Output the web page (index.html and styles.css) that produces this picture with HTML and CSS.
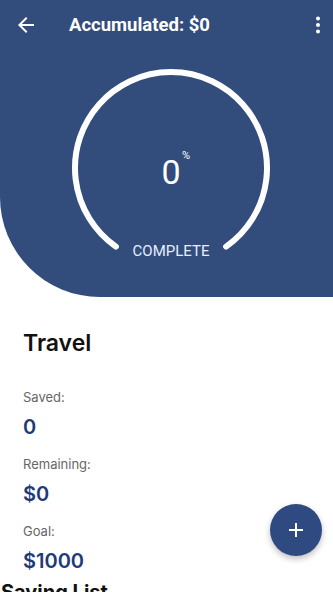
FILE: index.html
```html
<!DOCTYPE html>
<html>
<head>
<meta charset="utf-8">
<link rel="stylesheet" href="styles.css">
</head>
<body>
<div class="screen">
  <header class="hero">
    <div class="toolbar">
      <svg class="back" width="24" height="24" viewBox="0 0 24 24"><path d="M20 11H7.83l5.59-5.59L12 4l-8 8 8 8 1.41-1.41L7.83 13H20v-2z" fill="#fff"/></svg>
      <div class="title">Accumulated: $0</div>
      <svg class="more" width="24" height="24" viewBox="0 0 24 24"><circle cx="12" cy="5.5" r="2" fill="#fff"/><circle cx="12" cy="12" r="2" fill="#fff"/><circle cx="12" cy="18.5" r="2" fill="#fff"/></svg>
    </div>
    <svg class="gauge" width="333" height="247" viewBox="0 50 333 247">
      <path d="M115.9 246.6 A96 96 0 1 1 226.1 246.6" fill="none" stroke="#fff" stroke-width="6" stroke-linecap="round"/>
      <text x="171" y="184" text-anchor="middle" class="pct">0</text>
      <text x="182" y="159" class="pctsign">%</text>
      <text x="171" y="256" text-anchor="middle" class="complete">COMPLETE</text>
    </svg>
  </header>
  <main class="details">
    <h1 class="name">Travel</h1>
    <div class="stat">
      <div class="label">Saved:</div>
      <div class="value">0</div>
    </div>
    <div class="stat">
      <div class="label">Remaining:</div>
      <div class="value">$0</div>
    </div>
    <div class="stat">
      <div class="label">Goal:</div>
      <div class="value">$1000</div>
    </div>
    <h2 class="list">Saving List</h2>
  </main>
  <button class="fab"><svg width="18" height="18" viewBox="0 0 18 18"><path d="M9 2v14M2 9h14" stroke="#fff" stroke-width="2"/></svg></button>
</div>
</body>
</html>
```
FILE: styles.css
```css
* { box-sizing: border-box; }
html, body { margin: 0; padding: 0; background: #fff; }
body { width: 333px; height: 592px; overflow: hidden; font-family: "Inter", "Roboto", sans-serif; }
.screen { position: relative; width: 333px; height: 592px; overflow: hidden; }
.hero {
  background: #324c7c;
  height: 297px;
  border-bottom-left-radius: 100px;
  display: flex;
  flex-direction: column;
}
.toolbar {
  height: 50px;
  display: flex;
  align-items: center;
  padding: 0 3px 0 14px;
}
.back { flex: none; }
.title {
  flex: 1;
  margin-left: 31px;
  color: #fff;
  font-family: "Roboto", sans-serif;
  font-weight: 700;
  font-size: 18.5px;
}
.more { flex: none; }
.gauge { display: block; }
.pct { font-family: "Roboto", sans-serif; font-weight: 400; font-size: 34px; fill: #fff; }
.pctsign { font-family: "Roboto", sans-serif; font-size: 11px; fill: #fff; }
.complete { font-family: "Roboto", sans-serif; font-size: 15px; fill: #e6edff; }
.details { padding: 32px 23px 0; }
.name { margin: 0 0 32px; font-size: 23px; font-weight: 600; color: #111; line-height: 28px; }
.stat { display: flex; flex-direction: column; gap: 9px; margin-bottom: 16px; }
.label { font-size: 13px; color: #666; line-height: 16px; }
.value { font-size: 20px; font-weight: 600; color: #1f3a78; line-height: 26px; }
.list { margin: -11px 0 0 -22px; font-size: 20px; font-weight: 700; color: #111; line-height: 26px; }
.fab {
  position: absolute;
  left: 270px;
  top: 504px;
  width: 52px;
  height: 52px;
  border-radius: 50%;
  border: none;
  background: #2f4a80;
  box-shadow: 0 3px 6px rgba(0,0,0,0.25);
  display: flex;
  align-items: center;
  justify-content: center;
  padding: 0;
}
```
